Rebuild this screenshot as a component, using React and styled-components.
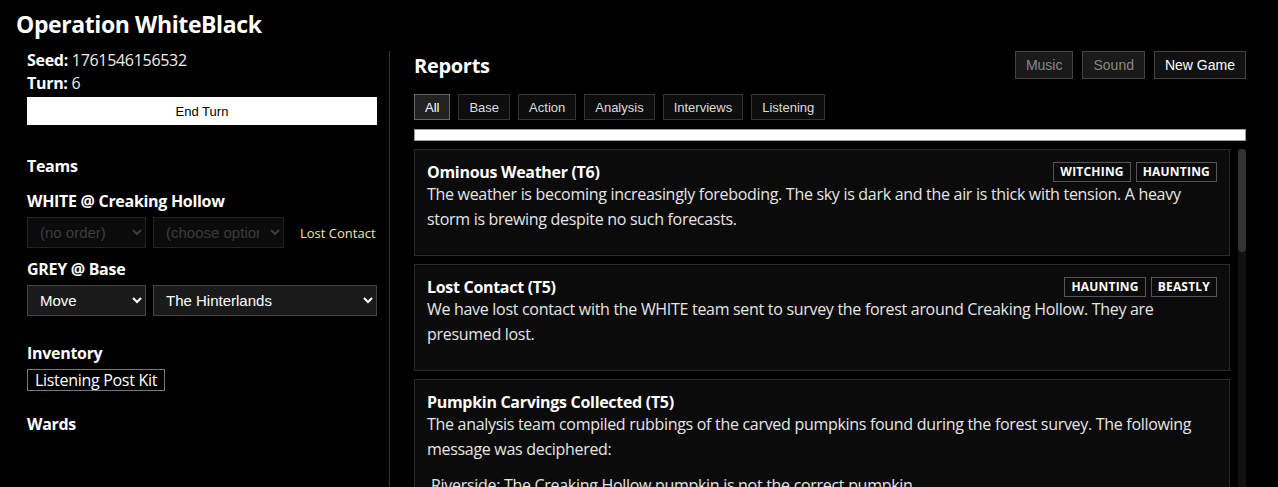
import React from "react";
import styled, { createGlobalStyle } from "styled-components";

const GlobalStyle = createGlobalStyle`
  html, body {
    margin: 0;
    padding: 0;
    background: #000;
    color: #eee;
    font-family: "Open Sans", "Noto Sans", sans-serif;
    letter-spacing: -0.3px;
    overflow: hidden;
  }
`;

const Page = styled.div`
  height: 100vh;
  display: flex;
  flex-direction: column;
  padding: 0 16px;
  box-sizing: border-box;
`;

const Title = styled.h1`
  margin: 7px 0 0;
  font-size: 23px;
  line-height: 34px;
  font-weight: 700;
  letter-spacing: -0.4px;
  color: #fff;
`;

const Main = styled.div`
  flex: 1;
  min-height: 0;
  display: grid;
  grid-template-columns: 374px 1fr;
  margin-top: 10px;
`;

const Sidebar = styled.aside`
  border-right: 1px solid #333;
  padding: 0 12px 0 11px;
  font-size: 16px;
`;

const InfoLine = styled.div`
  line-height: 23px;
  margin-top: ${(p) => p.$top || 0}px;
  b {
    font-weight: 700;
    color: #fff;
  }
`;

const EndTurn = styled.button`
  display: block;
  width: 100%;
  height: 28px;
  margin-top: 2px;
  background: #fff;
  color: #000;
  border: 1px solid #fff;
  font-family: "Liberation Sans", Arial, sans-serif;
  font-size: 13px;
  cursor: pointer;
`;

const Heading = styled.div`
  font-weight: 700;
  font-size: 16px;
  line-height: 22px;
  color: #fff;
  margin-top: ${(p) => p.$top}px;
`;

const OrderRow = styled.div`
  display: flex;
  align-items: center;
  gap: 7px;
  margin-top: 5px;
`;

const Select = styled.select`
  width: ${(p) => p.$w}px;
  height: 31px;
  box-sizing: border-box;
  color-scheme: dark;
  background: ${(p) => (p.disabled ? "#111" : "#1a1a1a")};
  color: ${(p) => (p.disabled ? "#555" : "#fff")};
  border: 1px solid ${(p) => (p.disabled ? "#333" : "#444")};
  border-radius: 0;
  padding: 0 8px;
  font-family: "Liberation Sans", Arial, sans-serif;
  font-size: 15px;
`;

const Status = styled.span`
  margin-left: 9px;
  color: #eee8aa;
  font-size: 13px;
  letter-spacing: 0;
  white-space: nowrap;
`;

const Chip = styled.span`
  display: inline-block;
  margin-top: 5px;
  border: 1px solid #777;
  padding: 0 7px;
  line-height: 20px;
  font-size: 16px;
  color: #fff;
`;

const Content = styled.section`
  display: flex;
  flex-direction: column;
  min-height: 0;
  padding: 0 16px 0 24px;
`;

const TopBar = styled.div`
  display: flex;
  align-items: center;
  justify-content: space-between;
  height: 28px;
`;

const ReportsTitle = styled.h2`
  margin: 0;
  font-size: 20px;
  font-weight: 700;
  color: #fff;
`;

const Controls = styled.div`
  display: flex;
  gap: 9px;
`;

const ControlButton = styled.button`
  height: 28px;
  padding: 0 10px;
  background: ${(p) => (p.$muted ? "#1a1a1a" : "#111")};
  color: ${(p) => (p.$muted ? "#888" : "#fff")};
  border: 1px solid #444;
  font-family: "Liberation Sans", Arial, sans-serif;
  font-size: 14px;
  cursor: pointer;
`;

const Tabs = styled.div`
  display: flex;
  gap: 8px;
  margin-top: 15px;
`;

const Tab = styled.button`
  height: 26px;
  padding: 0 10px;
  background: ${(p) => (p.$active ? "#222" : "#0d0d0d")};
  color: ${(p) => (p.$active ? "#fff" : "#ddd")};
  border: 1px solid ${(p) => (p.$active ? "#666" : "#333")};
  font-family: "Liberation Sans", Arial, sans-serif;
  font-size: 13px;
  cursor: pointer;
`;

const FilterBar = styled.div`
  height: 10px;
  margin-top: 9px;
  background: #fff;
  border: 1px solid #999;
`;

const ListArea = styled.div`
  flex: 1;
  min-height: 0;
  margin-top: 8px;
  display: flex;
  gap: 8px;
`;

const ReportList = styled.div`
  flex: 1;
  min-width: 0;
  overflow: hidden;
  display: flex;
  flex-direction: column;
  gap: 8px;
`;

const ScrollTrack = styled.div`
  width: 8px;
  flex-shrink: 0;
  background: #111;
`;

const ScrollThumb = styled.div`
  height: 103px;
  border-radius: 4px;
  background: #333;
`;

const Card = styled.article`
  flex-shrink: 0;
  background: #0b0b0b;
  border: 1px solid #2a2a2a;
  padding: 11px 12px 0;
`;

const CardHead = styled.div`
  display: flex;
  justify-content: space-between;
  align-items: center;
  height: 21px;
`;

const CardTitle = styled.div`
  font-weight: 700;
  font-size: 16px;
  color: #fff;
`;

const Tags = styled.div`
  display: flex;
  gap: 5px;
`;

const Tag = styled.span`
  border: 1px solid #555;
  padding: 0 6px;
  line-height: 18px;
  font-size: 12px;
  font-weight: 700;
  letter-spacing: 0.2px;
  color: #fff;
`;

const Body = styled.p`
  margin: 0 0 23px;
  font-size: 16px;
  line-height: 25px;
  color: #e6e6e6;
`;

const Quote = styled.p`
  margin: -12px 0 23px;
  padding-left: 4px;
  font-size: 16px;
  line-height: 25px;
  color: #e6e6e6;
`;

const reports = [
  {
    title: "Ominous Weather (T6)",
    tags: ["WITCHING", "HAUNTING"],
    body: "The weather is becoming increasingly foreboding. The sky is dark and the air is thick with tension. A heavy storm is brewing despite no such forecasts.",
  },
  {
    title: "Lost Contact (T5)",
    tags: ["HAUNTING", "BEASTLY"],
    body: "We have lost contact with the WHITE team sent to survey the forest around Creaking Hollow. They are presumed lost.",
  },
  {
    title: "Pumpkin Carvings Collected (T5)",
    tags: [],
    body: "The analysis team compiled rubbings of the carved pumpkins found during the forest survey. The following message was deciphered:",
    quote: "Riverside: The Creaking Hollow pumpkin is not the correct pumpkin.",
  },
  {
    title: "Survey Begun (T4)",
    tags: ["WITCHING"],
    body: "The WHITE team has arrived at Creaking Hollow and begun surveying the forest. Strange carvings have been spotted on pumpkins along the path.",
  },
  {
    title: "Team Deployed (T3)",
    tags: [],
    body: "The WHITE team has been deployed from base towards Creaking Hollow.",
  },
];

const tabs = ["All", "Base", "Action", "Analysis", "Interviews", "Listening"];

export default function App() {
  return (
    <Page>
      <GlobalStyle />
      <Title>Operation WhiteBlack</Title>
      <Main>
        <Sidebar>
          <InfoLine $top={-2}>
            <b>Seed:</b> 1761546156532
          </InfoLine>
          <InfoLine>
            <b>Turn:</b> 6
          </InfoLine>
          <EndTurn>End Turn</EndTurn>

          <Heading $top={30}>Teams</Heading>
          <Heading $top={13}>WHITE @ Creaking Hollow</Heading>
          <OrderRow>
            <Select $w={119} disabled>
              <option>(no order)</option>
            </Select>
            <Select $w={131} disabled>
              <option>(choose option)</option>
            </Select>
            <Status>Lost Contact</Status>
          </OrderRow>
          <Heading $top={10}>GREY @ Base</Heading>
          <OrderRow>
            <Select $w={119}>
              <option>Move</option>
            </Select>
            <Select $w={224}>
              <option>The Hinterlands</option>
            </Select>
          </OrderRow>

          <Heading $top={26}>Inventory</Heading>
          <Chip>Listening Post Kit</Chip>
          <Heading $top={22}>Wards</Heading>
        </Sidebar>

        <Content>
          <TopBar>
            <ReportsTitle>Reports</ReportsTitle>
            <Controls>
              <ControlButton $muted>Music</ControlButton>
              <ControlButton $muted>Sound</ControlButton>
              <ControlButton>New Game</ControlButton>
            </Controls>
          </TopBar>
          <Tabs>
            {tabs.map((t) => (
              <Tab key={t} $active={t === "All"}>
                {t}
              </Tab>
            ))}
          </Tabs>
          <FilterBar />
          <ListArea>
            <ReportList>
              {reports.map((r) => (
                <Card key={r.title}>
                  <CardHead>
                    <CardTitle>{r.title}</CardTitle>
                    <Tags>
                      {r.tags.map((t) => (
                        <Tag key={t}>{t}</Tag>
                      ))}
                    </Tags>
                  </CardHead>
                  <Body>{r.body}</Body>
                  {r.quote && <Quote>{r.quote}</Quote>}
                </Card>
              ))}
            </ReportList>
            <ScrollTrack>
              <ScrollThumb />
            </ScrollTrack>
          </ListArea>
        </Content>
      </Main>
    </Page>
  );
}
